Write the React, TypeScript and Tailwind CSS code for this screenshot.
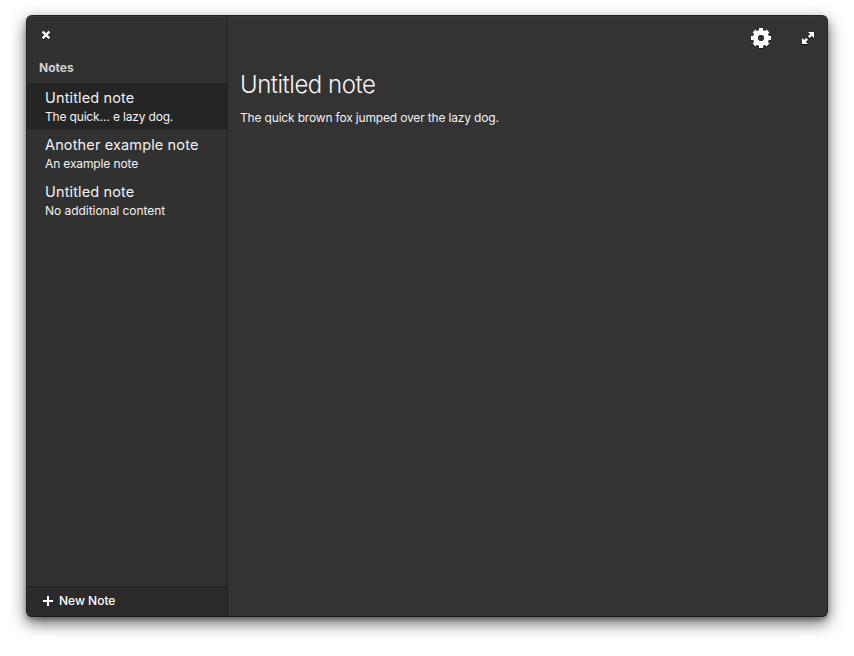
const notes = [
  { title: 'Untitled note', preview: 'The quick… e lazy dog.', active: true, tracking: 'tracking-[-0.17px]' },
  { title: 'Another example note', preview: 'An example note', active: false, tracking: 'tracking-[-0.13px]' },
  { title: 'Untitled note', preview: 'No additional content', active: false, tracking: 'tracking-[-0.04px]' },
];

function CloseIcon() {
  return (
    <svg className="h-2 w-2 overflow-visible drop-shadow-[0_1px_0_rgba(0,0,0,0.6)]" viewBox="0 0 8 8" fill="none" stroke="#fff" strokeWidth="2.3">
      <path d="M.6.6 7.4 7.4M7.4.6.6 7.4" />
    </svg>
  );
}

function GearIcon() {
  return (
    <svg className="h-5 w-5 overflow-visible drop-shadow-[0_1px_0_rgba(0,0,0,0.6)]" viewBox="0 0 20 20" fill="none" stroke="#fff">
      <circle cx="10" cy="10" r="5.600" strokeWidth="5" />
      <path d="M10 0v4M10 16v4M0 10h4M16 10h4M3 3l2.500 2.500M14.500 14.500 17 17M17 3l-2.500 2.500M5.500 14.500 3 17" strokeWidth="4" />
    </svg>
  );
}

function ExpandIcon() {
  return (
    <svg className="h-3 w-3 overflow-visible drop-shadow-[0_1px_0_rgba(0,0,0,0.6)]" viewBox="0 0 12 12" fill="#fff">
      <path d="M6 0H12v6L9.900 3.900 7.700 6.100 5.900 4.300 8.100 2.100z" />
      <path d="M6 12H0V6l2.100 2.100L4.300 5.900 6.100 7.700 3.900 9.900z" />
    </svg>
  );
}

export default function App() {
  return (
    <div className="h-[656px] w-[854px] overflow-hidden bg-white px-[26px] pt-[15px] font-['Inter',sans-serif] text-white">
      <div className="flex h-[602px] w-[802px] overflow-hidden rounded-[6px] border border-[#242424] border-b-[#181818] bg-[#333] shadow-[0_3px_4px_rgba(0,0,0,0.25),0_6px_16px_rgba(0,0,0,0.6)]">
        <aside className="flex w-[201px] flex-col rounded-t-[5px] border-r border-[#242424] bg-[#313131] shadow-[inset_0_1px_0_#3a3a3a]">
          <button className="ml-[15px] mt-[15px] h-2 w-2" aria-label="Close">
            <CloseIcon />
          </button>
          <h2 className="ml-3 mt-[21px] h-4 text-[12px] font-bold leading-4 text-[#d2d2d2]">Notes</h2>
          <ul className="mt-[7px]">
            {notes.map((note, i) => (
              <li key={i} className={`h-[47px] pl-[18px] pt-[5px] ${note.active ? 'bg-[#252525]' : ''}`}>
                <div className="h-5 whitespace-nowrap text-[14.500px] leading-5 tracking-[0.14px] text-[#f2f2f2]">{note.title}</div>
                <div className={`h-4 whitespace-nowrap pt-px text-[12px] leading-4 text-[#f2f2f2] ${note.tracking}`}>{note.preview}</div>
              </li>
            ))}
          </ul>
          <button className="mt-auto flex h-[30px] items-center border-t border-[#202020] bg-[#2a2a2a] pb-0.5 pl-4 text-[12px] font-medium">
            <svg className="mr-1.5 h-2.5 w-2.5" viewBox="0 0 10 10" fill="#fff">
              <path d="M4 0h2v4h4v2H6v4H4V6H0V4h4z" />
            </svg>
            New Note
          </button>
        </aside>
        <main className="flex-1 rounded-t-[5px] shadow-[inset_0_1px_0_#3a3a3a]">
          <header className="flex h-11 items-center justify-end gap-[31px] pr-[13px]">
            <button aria-label="Settings"><GearIcon /></button>
            <button aria-label="Fullscreen"><ExpandIcon /></button>
          </header>
          <h1 className="ml-3 mt-[9px] h-8 whitespace-nowrap text-[24px] font-light leading-8 tracking-[-0.48px] text-[#f4f4f4]">Untitled note</h1>
          <p className="ml-3 mt-[9px] h-4 whitespace-nowrap text-[12px] leading-4 tracking-[-0.17px] text-[#f2f2f2]">The quick brown fox jumped over the lazy dog.</p>
        </main>
      </div>
    </div>
  );
}
